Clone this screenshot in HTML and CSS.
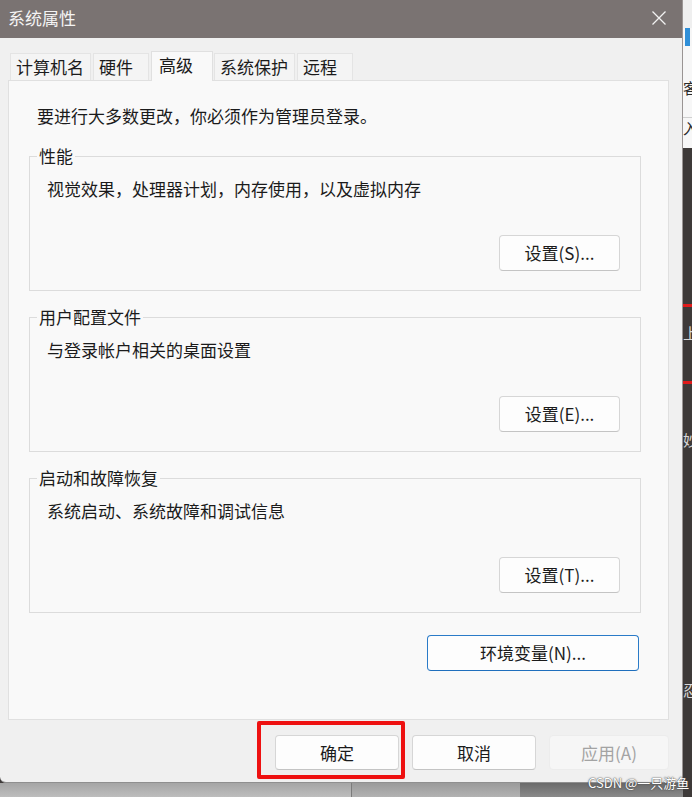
FILE: index.html
```html
<!DOCTYPE html>
<html lang="zh-CN">
<head>
<meta charset="utf-8">
<title>系统属性</title>
<link rel="stylesheet" href="styles.css">
</head>
<body>
<div class="screen">
  <div class="main">
    <div class="dialog">
      <div class="titlebar">
        <span class="title">系统属性</span>
        <span class="close">
          <svg width="16" height="16" viewBox="0 0 16 16"><path d="M1.5 1.5 L14.5 14.5 M14.5 1.5 L1.5 14.5" stroke="#f2f2f2" stroke-width="1.3" fill="none"/></svg>
        </span>
      </div>
      <div class="content">
        <div class="tabs">
          <div class="tab wide">计算机名</div>
          <div class="tab">硬件</div>
          <div class="tab active">高级</div>
          <div class="tab wide">系统保护</div>
          <div class="tab">远程</div>
        </div>
        <div class="panel">
          <p class="intro">要进行大多数更改，你必须作为管理员登录。</p>
          <fieldset class="group">
            <legend>性能</legend>
            <p class="desc">视觉效果，处理器计划，内存使用，以及虚拟内存</p>
            <div class="group-actions"><button class="btn btn-set">设置(S)...</button></div>
          </fieldset>
          <fieldset class="group">
            <legend>用户配置文件</legend>
            <p class="desc">与登录帐户相关的桌面设置</p>
            <div class="group-actions"><button class="btn btn-set">设置(E)...</button></div>
          </fieldset>
          <fieldset class="group">
            <legend>启动和故障恢复</legend>
            <p class="desc">系统启动、系统故障和调试信息</p>
            <div class="group-actions"><button class="btn btn-set">设置(T)...</button></div>
          </fieldset>
          <div class="env-row"><button class="btn btn-env">环境变量(N)...</button></div>
        </div>
        <div class="footer">
          <div class="ok-wrap">
            <button class="btn btn-ok">确定</button>
            <span class="annotation"></span>
          </div>
          <button class="btn btn-cancel">取消</button>
          <button class="btn btn-apply">应用(A)</button>
        </div>
      </div>
    </div>
    <div class="below">
      <div class="below-a"></div>
      <div class="below-b"></div>
      <div class="below-c"></div>
    </div>
  </div>
  <div class="side">
    <div class="side-top"></div>
    <div class="side-icon"></div>
    <div class="side-light">
      <span class="side-glyph g1">客</span>
      <span class="side-rule"></span>
      <span class="side-glyph g2">入</span>
    </div>
    <div class="side-dark">
      <span class="red-mark m1"></span>
      <span class="side-glyph g3">上</span>
      <span class="red-mark m2"></span>
      <span class="side-glyph g4">妙</span>
      <span class="side-glyph g5">忍</span>
    </div>
  </div>
  <span class="watermark">CSDN @一只游鱼</span>
</div>
</body>
</html>
```

FILE: styles.css
```css
* { box-sizing: border-box; }
html, body { margin: 0; padding: 0; }
body {
  width: 692px;
  height: 797px;
  overflow: hidden;
  font-family: "Noto Sans CJK SC", "Microsoft YaHei UI", sans-serif;
  font-size: 17px;
  color: #1b1b1b;
  background: #3e3a39;
}
.screen {
  position: relative;
  display: flex;
  width: 692px;
  height: 797px;
}
.main {
  width: 683px;
  display: flex;
  flex-direction: column;
}
.dialog {
  width: 683px;
  height: 783px;
  background: #f0f0f0;
  border-right: 1px solid #9a9594;
  border-bottom: 1px solid #8f8f8f;
  border-bottom-left-radius: 6px;
  display: flex;
  flex-direction: column;
}
.titlebar {
  height: 38px;
  background: #7a7372;
  display: flex;
  align-items: center;
  justify-content: space-between;
  padding: 0 0 3px 8px;
  flex-shrink: 0;
}
.title {
  color: #f4f4f4;
  font-size: 17px;
  line-height: 22px;
}
.close {
  width: 46px;
  height: 35px;
  display: flex;
  align-items: center;
  justify-content: center;
}
.content {
  padding: 13px 13px 0 8px;
  display: flex;
  flex-direction: column;
}
.tabs {
  display: flex;
  align-items: flex-end;
  height: 30px;
  padding-left: 2px;
  position: relative;
  z-index: 1;
}
.tab {
  height: 27px;
  min-width: 56px;
  padding: 0 5px;
  margin: 0 2px 1px 0;
  background: #f4f4f4;
  border: 1px solid #e4e4e4;
  border-bottom: none;
  line-height: 25px;
  white-space: nowrap;
}
.tab.wide { padding: 0 6px 0 5px; }
.tab.active {
  height: 30px;
  margin: 0 1px 0 0;
  padding: 0 7px;
  min-width: 62px;
  background: #f9f9f9;
  line-height: 26px;
  border-color: #e0e0e0;
}
.panel {
  width: 661px;
  height: 640px;
  margin-top: -1px;
  background: #f9f9f9;
  border: 1px solid #e0e0e0;
  padding: 24px 27px 0 20px;
}
.intro {
  margin: 0 0 18px 8px;
  line-height: 22px;
}
.group {
  margin: 0 0 15px 0;
  padding: 0 7px 19px 7px;
  border: 1px solid #dcdcdc;
  min-width: 0;
}
.group:last-of-type { margin-bottom: 0; }
.group legend {
  padding: 0 2px;
  line-height: 22px;
  font-size: 17px;
}
.desc {
  margin: 11px 0 0 10px;
  line-height: 22px;
}
.group-actions {
  display: flex;
  justify-content: flex-end;
  margin-top: 35px;
  padding-right: 13px;
}
.btn {
  font-family: inherit;
  font-size: 17px;
  color: #1b1b1b;
  background: #fdfdfd;
  border: 1px solid #d6d6d6;
  border-bottom-color: #c4c4c4;
  border-radius: 4px;
  height: 36px;
  padding: 0;
  line-height: 22px;
}
.btn-set { width: 121px; }
.env-row {
  display: flex;
  justify-content: flex-end;
  margin-top: 22px;
  padding-right: 2px;
}
.btn-env {
  width: 212px;
  border: 1px solid #2a7bc8;
  border-bottom-color: #1f6fbd;
}
.footer {
  display: flex;
  justify-content: flex-end;
  gap: 13px;
  padding-top: 15px;
}
.ok-wrap {
  position: relative;
  display: flex;
}
.btn-ok { width: 124px; height: 35px; }
.btn-cancel { width: 124px; height: 35px; }
.btn-apply {
  width: 120px;
  height: 35px;
  background: #f6f6f6;
  border-color: #ececec;
  color: #a3a3a3;
}
.annotation {
  position: absolute;
  left: -18px;
  top: -14px;
  width: 148px;
  height: 58px;
  border: 4px solid #ee1111;
  border-radius: 2px;
  pointer-events: none;
}
.below {
  flex: 1;
  display: flex;
}
.below-a {
  width: 352px;
  background: linear-gradient(#a5a5a5, #bdbdbd);
  border-right: 1px solid #7c7c7c;
}
.below-b {
  width: 168px;
  background: linear-gradient(#9a9a9a, #b2b2b2);
}
.below-c {
  flex: 1;
  background: linear-gradient(#6a6a6a, #8a8a8a);
}
.side {
  width: 9px;
  display: flex;
  flex-direction: column;
  overflow: hidden;
}
.side-top {
  height: 28px;
  background: #efefef;
}
.side-icon {
  height: 18px;
  background: linear-gradient(90deg, #f6f6f6 0, #f6f6f6 2px, #2f8fd8 2px, #2f8fd8 7px, #f6f6f6 7px);
}
.side-light {
  height: 102px;
  background: #f7f7f7;
  display: flex;
  flex-direction: column;
  overflow: hidden;
}
.side-glyph {
  display: block;
  font-size: 15px;
  line-height: 16px;
  width: 16px;
  color: #2a2a2a;
  white-space: nowrap;
}
.g1 { margin-top: 34px; }
.side-rule {
  display: block;
  height: 1px;
  background: #d0d0d0;
  margin-top: 21px;
}
.g2 { margin-top: 2px; }
.side-dark {
  flex: 1;
  background: #3e3a39;
  display: flex;
  flex-direction: column;
  overflow: hidden;
}
.side-dark .side-glyph { color: #d8d8d8; }
.red-mark {
  display: block;
  height: 3px;
  background: #e01b1b;
}
.m1 { margin-top: 156px; }
.g3 { margin-top: 18px; }
.m2 { margin-top: 40px; }
.g4 { margin-top: 48px; }
.g5 { margin-top: 234px; }
.watermark {
  position: absolute;
  left: 588px;
  top: 775px;
  font-size: 13px;
  line-height: 16px;
  color: #ffffff;
  text-shadow: 0 0 2px #555, 0 0 1px #333;
  white-space: nowrap;
}
```
